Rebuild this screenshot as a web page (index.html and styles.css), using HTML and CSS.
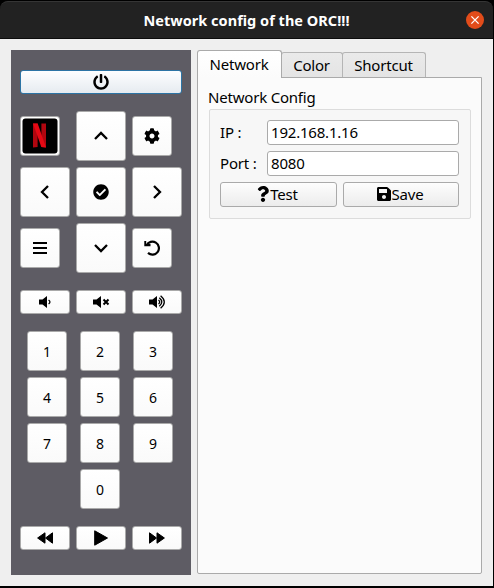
FILE: index.html
```html
<!DOCTYPE html>
<html lang="en">
<head>
<meta charset="utf-8">
<title>Network config of the ORC!!!</title>
<link rel="stylesheet" href="styles.css">
</head>
<body>
<div class="window">
  <header class="titlebar">
    <h1>Network config of the ORC!!!</h1>
    <button class="close" aria-label="Close"><svg width="18" height="18" viewBox="0 0 18 18"><path d="M5.4 5.4l7.2 7.2M12.6 5.4l-7.2 7.2" stroke="#fff" stroke-width="1.3"/></svg></button>
  </header>
  <main class="content">
    <section class="remote">
      <button class="key power"><svg width="16" height="16" viewBox="0 0 512 512"><path d="M400 54.1c63 45 104 118.6 104 201.9 0 136.8-110.8 247.7-247.5 248C120 504.3 8.2 393 8 256.4 7.9 173.1 48.9 99.3 111.8 54.2c11.7-8.3 28-4.8 35 7.7L162.6 90c5.9 10.5 3.1 23.8-6.6 31-41.5 30.8-68 79.6-68 134.9-.1 92.3 74.5 168.1 168 168.1 91.6 0 168.6-74.2 168-169.1-.3-51.8-24.7-101.8-68.1-134-9.7-7.2-12.4-20.5-6.5-30.9l15.8-28.1c7-12.4 23.2-16.1 34.8-7.8zM296 264V24c0-13.3-10.7-24-24-24h-32c-13.3 0-24 10.7-24 24v240c0 13.3 10.7 24 24 24h32c13.3 0 24-10.7 24-24z"/></svg></button>
      <div class="pad">
        <button class="key small app"><svg width="36" height="36" viewBox="0 0 36 36"><rect x=".5" y=".5" width="35" height="35" rx="3"/><path d="M11 5.500h4.600V29l-4.600.6zM19.400 5.500H24v24.100l-4.600-.6z" fill="#b1060f"/><path d="M11 5.500h4.700l8.300 24.100-4.700-.5z" fill="#e50914"/></svg></button>
        <button class="key"><svg width="16" height="16" viewBox="0 0 16 16"><path class="line" d="M2 11l6-6 6 6"/></svg></button>
        <button class="key small"><svg width="16" height="16" viewBox="0 0 512 512"><path d="M487.4 315.700l-42.600-24.600c4.300-23.200 4.300-47 0-70.200l42.600-24.600c4.900-2.800 7.100-8.600 5.500-14-11.100-35.600-30-67.800-54.700-94.600-3.800-4.100-10-5.100-14.800-2.300L380.800 110c-17.900-15.400-38.500-27.300-60.800-35.100V25.800c0-5.600-3.900-10.500-9.400-11.700-36.700-8.200-74.300-7.800-109.200 0-5.500 1.200-9.400 6.100-9.400 11.700V75c-22.200 7.900-42.800 19.800-60.800 35.100L88.700 85.500c-4.900-2.800-11-1.900-14.800 2.300-24.700 26.700-43.600 58.900-54.700 94.600-1.700 5.400.6 11.200 5.500 14L67.300 221c-4.300 23.200-4.300 47 0 70.200l-42.600 24.600c-4.900 2.800-7.100 8.600-5.500 14 11.100 35.600 30 67.800 54.700 94.600 3.800 4.100 10 5.100 14.800 2.300l42.600-24.600c17.900 15.400 38.500 27.300 60.800 35.100v49.200c0 5.600 3.900 10.500 9.400 11.700 36.700 8.200 74.300 7.800 109.200 0 5.500-1.200 9.400-6.100 9.400-11.700v-49.200c22.200-7.900 42.800-19.800 60.800-35.100l42.600 24.600c4.900 2.800 11 1.900 14.800-2.300 24.700-26.700 43.600-58.900 54.700-94.600 1.500-5.500-.7-11.300-5.600-14.100zM256 336c-44.100 0-80-35.900-80-80s35.900-80 80-80 80 35.900 80 80-35.900 80-80 80z"/></svg></button>
        <button class="key"><svg width="16" height="16" viewBox="0 0 16 16"><path class="line" d="M11 2L5 8l6 6"/></svg></button>
        <button class="key"><svg width="16" height="16" viewBox="0 0 512 512"><path d="M504 256c0 136.967-111.033 248-248 248S8 392.967 8 256 119.033 8 256 8s248 111.033 248 248zM227.314 387.314l184-184c6.248-6.248 6.248-16.379 0-22.627l-22.627-22.627c-6.248-6.249-16.379-6.249-22.628 0L216 308.118l-70.059-70.059c-6.248-6.248-16.379-6.248-22.628 0l-22.627 22.627c-6.248 6.248-6.248 16.379 0 22.627l104 104c6.249 6.249 16.379 6.249 22.628.001z"/></svg></button>
        <button class="key"><svg width="16" height="16" viewBox="0 0 16 16"><path class="line" d="M5 2l6 6-6 6"/></svg></button>
        <button class="key small"><svg width="16" height="16" viewBox="0 0 16 16"><path d="M1 2h14v2H1zM1 7h14v2H1zM1 12h14v2H1z"/></svg></button>
        <button class="key"><svg width="16" height="16" viewBox="0 0 16 16"><path class="line" d="M2 5l6 6 6-6"/></svg></button>
        <button class="key small"><svg width="16" height="16" viewBox="0 0 16 16"><path d="M2.600 5.200A6.500 6.500 0 1 1 4 12.900" fill="none" stroke="#000" stroke-width="2.200"/><path d="M.3 1h1.900v3.100h4.300v2.200H.3z"/></svg></button>
      </div>
      <div class="row volume">
        <button class="key"><svg width="16" height="16" viewBox="0 0 16 16"><path d="M2 5.500h3.500L10 2v12l-4.500-3.500H2z"/><path class="thin" d="M11.600 6q2.700 2 0 4"/></svg></button>
        <button class="key"><svg width="18" height="16" viewBox="0 0 18 16"><path d="M1 5.500h3.500L9 2v12l-4.500-3.500H1z"/><path d="M11.500 5.500l5 5M16.500 5.500l-5 5" stroke="#000" stroke-width="2"/></svg></button>
        <button class="key"><svg width="18" height="16" viewBox="0 0 18 16"><path d="M1 5.500h3.500L9 2v12l-4.500-3.500H1z"/><path class="thin" d="M10.500 6q2.400 2 0 4M11.300 3.800q5 4.200 0 8.400M12.600 1.800q7.400 6.200 0 12.400"/></svg></button>
      </div>
      <div class="digits">
        <button class="key small">1</button><button class="key small">2</button><button class="key small">3</button>
        <button class="key small">4</button><button class="key small">5</button><button class="key small">6</button>
        <button class="key small">7</button><button class="key small">8</button><button class="key small">9</button>
        <button class="key small zero">0</button>
      </div>
      <div class="row media">
        <button class="key"><svg width="18" height="16" viewBox="0 0 18 16"><path class="solid" d="M9 2.800v10.400L1.600 8zM16.500 2.800v10.400L9.500 8z"/></svg></button>
        <button class="key"><svg width="16" height="16" viewBox="0 0 16 16"><path class="solid" d="M1.700.8L14.500 8 1.700 15.200z"/></svg></button>
        <button class="key"><svg width="18" height="16" viewBox="0 0 18 16"><path class="solid" d="M1.500 2.800v10.400L8.500 8zM9 2.800v10.400L16.400 8z"/></svg></button>
      </div>
    </section>
    <section class="settings">
      <nav class="tabs">
        <button class="tab active"><span>Network</span></button>
        <button class="tab color"><span>Color</span></button>
        <button class="tab shortcut"><span>Shortcut</span></button>
      </nav>
      <div class="pane">
        <h2>Network Config</h2>
        <form class="group">
          <label for="ip">IP :</label><input id="ip" value="192.168.1.16">
          <label for="port">Port :</label><input id="port" value="8080">
          <div class="actions">
            <button type="button"><svg width="12" height="16" viewBox="0 0 384 512"><path d="M202.021 0C122.202 0 70.503 32.703 29.914 91.026c-7.363 10.580-5.093 25.086 5.178 32.874l43.138 32.709c10.373 7.865 25.132 6.026 33.253-4.148 25.049-31.381 43.630-49.449 82.757-49.449 30.764 0 68.816 19.799 68.816 49.631 0 22.552-18.617 34.134-48.993 51.164-35.423 19.860-82.299 44.576-82.299 106.405V320c0 13.255 10.745 24 24 24h72.471c13.255 0 24-10.745 24-24v-5.773c0-42.860 125.268-44.645 125.268-160.627C377.504 66.256 286.902 0 202.021 0zM192 373.459c-38.196 0-69.271 31.075-69.271 69.271 0 38.195 31.075 69.270 69.271 69.270s69.271-31.075 69.271-69.271-31.075-69.270-69.271-69.270z"/></svg><span>Test</span></button>
            <button type="button"><svg width="14" height="16" viewBox="0 0 448 512"><path d="M433.941 129.941l-83.882-83.882A48 48 0 0 0 316.118 32H48C21.490 32 0 53.490 0 80v352c0 26.510 21.490 48 48 48h352c26.510 0 48-21.490 48-48V163.882a48 48 0 0 0-14.059-33.941zM224 416c-35.346 0-64-28.654-64-64 0-35.346 28.654-64 64-64s64 28.654 64 64c0 35.346-28.654 64-64 64zm96-304.520V212c0 6.627-5.373 12-12 12H76c-6.627 0-12-5.373-12-12V108c0-6.627 5.373-12 12-12h228.520c3.183 0 6.235 1.264 8.485 3.515l3.480 3.480A11.996 11.996 0 0 1 320 111.480z"/></svg><span>Save</span></button>
          </div>
        </form>
      </div>
    </section>
  </main>
</div>
</body>
</html>
```
FILE: styles.css
```css
* { box-sizing: border-box; }
body {
  margin: 0;
  background: #000;
  color: #000;
  font: 15px/20px "Noto Sans", "Open Sans", sans-serif;
  letter-spacing: -0.200px;
}
button, input { font: inherit; color: inherit; letter-spacing: inherit; margin: 0; padding: 0; }
svg { display: block; flex: none; }
.window {
  height: 588px;
  padding: 1px 1px 2px 0;
  display: flex;
  flex-direction: column;
}
.titlebar {
  height: 38px;
  display: grid;
  grid-template-columns: 1fr 18px;
  align-items: center;
  padding-right: 9px;
  background: #222;
  border-top: 1px solid #353535;
  border-bottom: 1px solid #0c0c0c;
  border-radius: 8px 8px 0 0;
}
h1 {
  margin: 0 0 0 27px;
  text-align: center;
  color: #fff;
  font-size: 14.500px;
  font-weight: 700;
  letter-spacing: 0.020px;
  line-height: 20px;
}
.close { width: 18px; height: 18px; border: 0; border-radius: 50%; background: #e24c1a; }
.content {
  flex: 1;
  display: flex;
  gap: 6px;
  padding: 11px 11px 11px 11px;
  background: #efefef;
}
.remote {
  width: 180px;
  padding: 20px 9px 0;
  background: #5e5c64;
}
.key {
  display: flex;
  align-items: center;
  justify-content: center;
  width: 50px;
  height: 50px;
  border: 1px solid #aaa;
  border-radius: 3px;
  background: linear-gradient(#fff, #fafafa);
  font-size: 14px;
}
.key.small { width: 40px; height: 40px; }
.key.power {
  width: 162px;
  height: 24px;
  border-color: #2c74a5;
  background: linear-gradient(#fdfeff, #e6ebf0);
}
.line { fill: none; stroke: #000; stroke-width: 2.300; }
.thin { fill: none; stroke: #000; stroke-width: 1.300; }
.solid { stroke: #000; stroke-width: 1; stroke-linejoin: round; }
.pad {
  display: grid;
  grid-template-columns: repeat(3, 50px);
  gap: 6px;
  align-items: center;
  margin-top: 17px;
}
.app { padding: 0 1px 1px 0; }
.row { display: flex; gap: 6px; }
.row .key { height: 24px; }
.volume { margin-top: 17px; }
.digits {
  display: grid;
  grid-template-columns: repeat(3, 40px);
  gap: 6px 13px;
  margin: 17px 0 17px 7px;
}
.digits .key { padding-top: 1px; }
.zero { grid-column: 2; }
.settings { flex: 1; display: flex; flex-direction: column; padding-bottom: 1px; }
.tabs { display: flex; align-items: flex-end; height: 27px; }
.tab {
  height: 25px;
  width: 62px;
  padding-right: 1px;
  border: 1px solid #b5b5b5;
  border-bottom: 0;
  border-radius: 3px 3px 0 0;
  background: linear-gradient(#eaeaea, #e4e4e4);
}
.tab.active {
  width: 85px;
  height: 28px;
  margin-bottom: -1px;
  padding-bottom: 2px;
  background: linear-gradient(#fff, #fbfbfb);
  border-color: #aaa;
  position: relative;
}
.tab.color { margin-left: -1px; }
.tab.shortcut { width: 84px; margin-left: -1px; }
.pane {
  flex: 1;
  padding: 9px 10px 0 11px;
  border: 1px solid #aaa;
  border-radius: 0 0 2px 2px;
  background: #fbfbfb;
}
h2 { margin: 0 0 2px -1px; font-size: 15px; font-weight: 400; line-height: 20px; }
.group {
  display: grid;
  grid-template-columns: 41px 192px;
  gap: 6px;
  height: 110px;
  padding: 10px 0 0 10px;
  border: 1px solid #dcdcdc;
  border-radius: 2px;
  background: #f7f7f7;
  align-content: start;
}
label { line-height: 25px; white-space: nowrap; }
input {
  width: 192px;
  height: 25px;
  padding: 0 3px 1px;
  border: 1px solid #aaa;
  border-radius: 3px;
  background: #fff;
}
.actions { grid-column: 1 / 3; display: grid; grid-template-columns: 117px 116px; gap: 6px; }
.actions button {
  display: flex;
  align-items: center;
  justify-content: center;
  gap: 1px;
  height: 25px;
  padding: 0 2px 1px 0;
  border: 1px solid #aaa;
  border-radius: 3px;
  background: linear-gradient(#fdfdfd, #ececec);
}
```
